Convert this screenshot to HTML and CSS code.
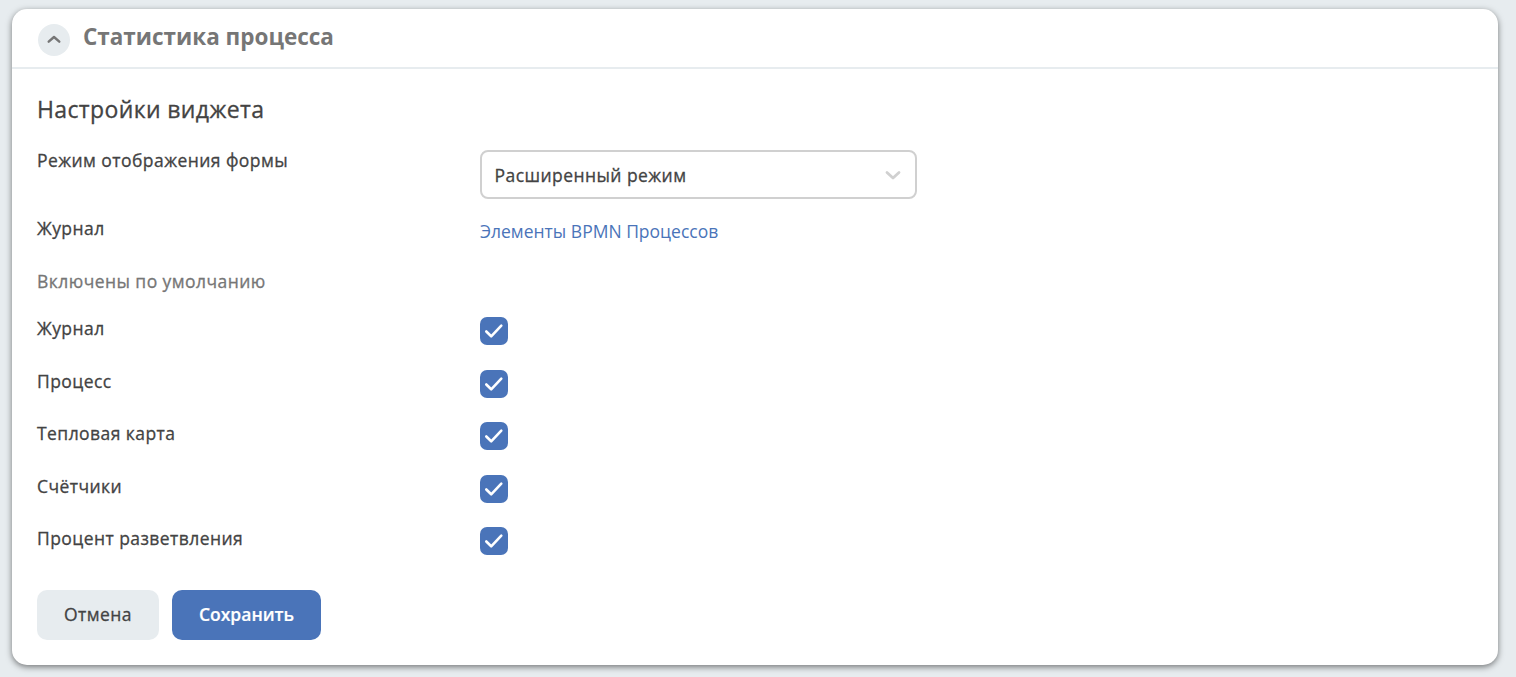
FILE: index.html
```html
<!DOCTYPE html>
<html lang="ru">
<head>
<meta charset="utf-8">
<title>Статистика процесса</title>
<link rel="stylesheet" href="styles.css">
</head>
<body>
<section class="card">
  <header class="card-header">
    <button class="toggle" aria-label="Свернуть"><svg width="14" height="10" viewBox="0 0 14 10"><path d="M1.700 6.700 7 2l5.300 4.700"/></svg></button>
    <h1 class="title"><span>Статистика процесса</span></h1>
  </header>
  <div class="card-body">
    <h2 class="subtitle"><span>Настройки виджета</span></h2>
    <div class="row row-select">
      <span class="label">Режим отображения формы</span>
      <div class="select"><span>Расширенный режим</span><svg width="16" height="10" viewBox="0 0 16 10"><path d="M2 2.500l6 5.500L14 2.500"/></svg></div>
    </div>
    <div class="row row-link"><span class="label">Журнал</span><a class="link">Элементы BPMN Процессов</a></div>
    <div class="row row-caption"><span class="caption">Включены по умолчанию</span></div>
    <div class="row"><span class="label">Журнал</span><span class="check"><svg width="20" height="16" viewBox="0 0 20 16"><path d="M2.300 8.500l4.900 4.800L17.300 2.700"/></svg></span></div>
    <div class="row"><span class="label">Процесс</span><span class="check"><svg width="20" height="16" viewBox="0 0 20 16"><path d="M2.300 8.500l4.900 4.800L17.300 2.700"/></svg></span></div>
    <div class="row"><span class="label">Тепловая карта</span><span class="check"><svg width="20" height="16" viewBox="0 0 20 16"><path d="M2.300 8.500l4.900 4.800L17.300 2.700"/></svg></span></div>
    <div class="row"><span class="label">Счётчики</span><span class="check"><svg width="20" height="16" viewBox="0 0 20 16"><path d="M2.300 8.500l4.900 4.800L17.300 2.700"/></svg></span></div>
    <div class="row"><span class="label">Процент разветвления</span><span class="check"><svg width="20" height="16" viewBox="0 0 20 16"><path d="M2.300 8.500l4.900 4.800L17.300 2.700"/></svg></span></div>
    <div class="actions"><button class="btn">Отмена</button><button class="btn btn-primary">Сохранить</button></div>
  </div>
</section>
</body>
</html>
```
FILE: styles.css
```css
* { box-sizing: border-box; }
body {
  margin: 0;
  padding: 9px 18px 12px 12px;
  height: 677px;
  background: #e7ecef;
  color: #434343;
  font: 500 17.5px/24px "Open Sans", sans-serif;
}
.card {
  height: 656px;
  background: #fff;
  border-radius: 15px;
  box-shadow: 0 2px 6px rgba(0, 0, 0, .5);
}
.card-header {
  display: flex;
  gap: 13px;
  height: 60px;
  padding: 12px 26px 0;
  border-bottom: 2px solid #e7ecef;
}
.toggle {
  display: flex;
  align-items: center;
  justify-content: center;
  width: 32px;
  height: 32px;
  margin-top: 3px;
  padding: 0;
  border: 0;
  border-radius: 50%;
  background: #e7ecef;
}
svg { fill: none; stroke-linecap: round; stroke-linejoin: round; }
.toggle svg { stroke: #767676; stroke-width: 2.4; }
.title { margin: 0; color: #767676; font-size: 22.5px; font-weight: 700; line-height: 32px; }
.card-body { padding: 24px 25px 0; }
.subtitle {
  margin: 0 0 25px;
  font-size: 23px;
  font-weight: 500;
  line-height: 32px;
  letter-spacing: .37px;
  -webkit-text-stroke: .3px;
}
.label, .caption, .select, .btn {
  letter-spacing: .44px;
  -webkit-text-stroke: .3px;
}
.row {
  display: grid;
  grid-template-columns: 443px 437px;
  align-items: start;
  height: 52.5px;
}
.row-select { height: 67px; }
.row-link { height: 53px; }
.row-caption { height: 47px; }
.label, .caption { margin-top: -1px; }
.caption { color: #767676; }
.select {
  display: flex;
  align-items: center;
  justify-content: space-between;
  height: 49px;
  padding: 0 14.5px 0 12.5px;
  border: 2px solid #d0d0d0;
  border-radius: 8px;
}
.select svg { stroke: #d0d0d0; stroke-width: 2.8; }
.row-select .label { margin-top: -2px; }
.link { margin-top: 2px; color: #4a74b9; font-weight: 400; }
.check {
  display: flex;
  align-items: center;
  justify-content: center;
  width: 28px;
  height: 28px;
  border-radius: 7px;
  background: #4a74b9;
}
.check svg { stroke: #fff; stroke-width: 2.6; }
.actions { display: flex; gap: 13px; margin-top: 10px; }
.btn {
  width: 122px;
  height: 50px;
  padding: 0 0 2px;
  border: 0;
  border-radius: 10px;
  background: #e7ecef;
  color: #434343;
  font: inherit;
}
.btn-primary {
  width: 149px;
  background: #4a74b9;
  color: #fff;
  font-weight: 600;
  letter-spacing: 0;
  -webkit-text-stroke: .2px;
}
```
